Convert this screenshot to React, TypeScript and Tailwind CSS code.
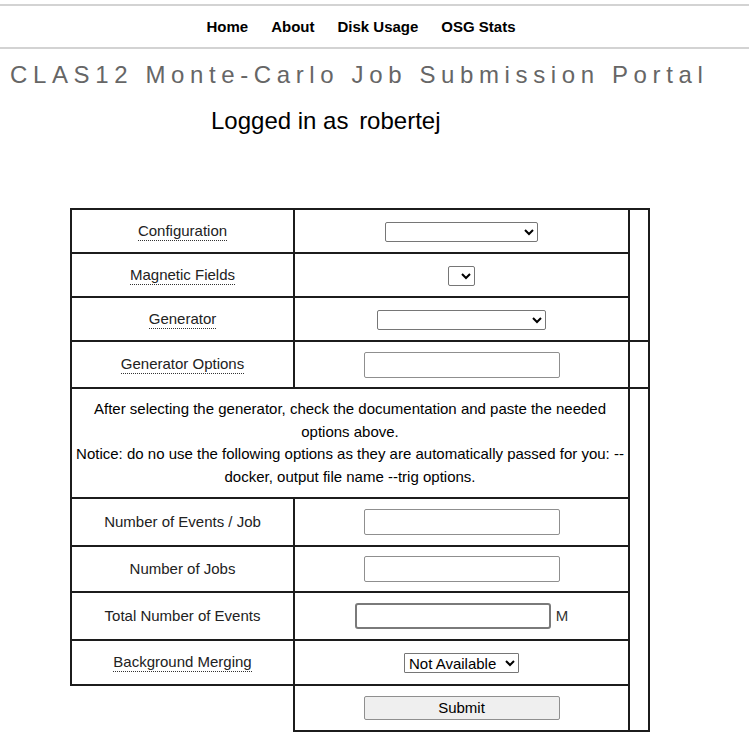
import React from "react";

const font = { fontFamily: '"Liberation Sans", Arial, sans-serif' };

function Label({ text, tip }: { text: string; tip?: boolean }) {
  if (!tip) return <span className="text-[#222]">{text}</span>;
  return (
    <span className="text-[#222] border-b border-dotted border-[#333] pb-[1px]">
      {text}
    </span>
  );
}

export default function App() {
  const cell = "border-2 border-[#1c1c1c] text-center align-middle p-0";
  return (
    <div className="bg-white min-h-[748px] text-[15px] text-black" style={font}>
      <div className="pt-[4px]">
        <div className="border-t-2 border-[#d3d3d3]" />
        <nav className="h-[41px] pt-[1px] flex items-center justify-center pr-[27px] gap-[23px] font-bold">
          <a>Home</a>
          <a>About</a>
          <a>Disk Usage</a>
          <a>OSG Stats</a>
        </nav>
        <div className="border-t-2 border-[#d3d3d3]" />
      </div>

      <h1 className="mt-[12px] pl-[10px] text-[24px] leading-[28px] tracking-[5.62px] text-[#666] whitespace-nowrap">
        CLAS12 Monte-Carlo Job Submission Portal
      </h1>

      <div className="mt-[18px] pl-[211px] text-[24px] leading-[28px]">
        Logged in as <span className="ml-[4px]">robertej</span>
      </div>

      <table className="ml-[70px] mt-[73px] border-collapse w-[580px]">
        <tbody>
          <tr className="h-[44px]">
            <td className={`${cell} w-[223px]`}>
              <Label text="Configuration" tip />
            </td>
            <td className={`${cell} w-[335px]`}>
              <select className="w-[153px] h-[20px] border border-[#767676] rounded-[2px] bg-white align-middle" />
            </td>
            <td rowSpan={3} className={cell}></td>
          </tr>
          <tr className="h-[44px]">
            <td className={cell}>
              <Label text="Magnetic Fields" tip />
            </td>
            <td className={cell}>
              <select className="w-[27px] h-[20px] border border-[#767676] rounded-[2px] bg-white align-middle" />
            </td>
          </tr>
          <tr className="h-[44px]">
            <td className={cell}>
              <Label text="Generator" tip />
            </td>
            <td className={cell}>
              <select className="w-[169px] h-[20px] border border-[#767676] rounded-[2px] bg-white align-middle" />
            </td>
          </tr>
          <tr className="h-[47px]">
            <td className={cell}>
              <Label text="Generator Options" tip />
            </td>
            <td className={cell}>
              <input className="w-[196px] h-[26px] border border-[#8f8f8f] rounded-[2px] align-middle" />
            </td>
            <td className={cell}></td>
          </tr>
          <tr className="h-[110px]">
            <td colSpan={2} className={`${cell} px-[4px] leading-[22.5px]`}>
              After selecting the generator, check the documentation and paste the needed options above.
              <br />
              Notice: do no use the following options as they are automatically passed for you: --<wbr />docker, output file name --trig options.
            </td>
            <td rowSpan={6} className={cell}></td>
          </tr>
          <tr className="h-[48px]">
            <td className={cell}>
              <Label text="Number of Events / Job" />
            </td>
            <td className={cell}>
              <input className="w-[196px] h-[26px] border border-[#8f8f8f] rounded-[2px] align-middle" />
            </td>
          </tr>
          <tr className="h-[46px]">
            <td className={cell}>
              <Label text="Number of Jobs" />
            </td>
            <td className={cell}>
              <input className="w-[196px] h-[26px] border border-[#8f8f8f] rounded-[2px] align-middle" />
            </td>
          </tr>
          <tr className="h-[48px]">
            <td className={cell}>
              <Label text="Total Number of Events" />
            </td>
            <td className={cell}>
              <div className="flex items-center justify-center">
                <input className="w-[196px] h-[26px] border-2 border-[#7a7a7a] rounded-[3px]" />
                <span className="ml-[5px] text-[#333]">M</span>
              </div>
            </td>
          </tr>
          <tr className="h-[45px]">
            <td className={cell}>
              <Label text="Background Merging" tip />
            </td>
            <td className={cell}>
              <select className="w-[115px] h-[20px] border border-[#767676] rounded-[1px] bg-white align-middle leading-[18px]">
                <option>Not Available</option>
              </select>
            </td>
          </tr>
          <tr className="h-[46px]">
            <td className="p-0"></td>
            <td className={cell}>
              <button className="w-[196px] h-[24px] border border-[#8f8f8f] rounded-[2px] bg-[#efefef] align-middle">
                Submit
              </button>
            </td>
          </tr>
        </tbody>
      </table>
    </div>
  );
}
